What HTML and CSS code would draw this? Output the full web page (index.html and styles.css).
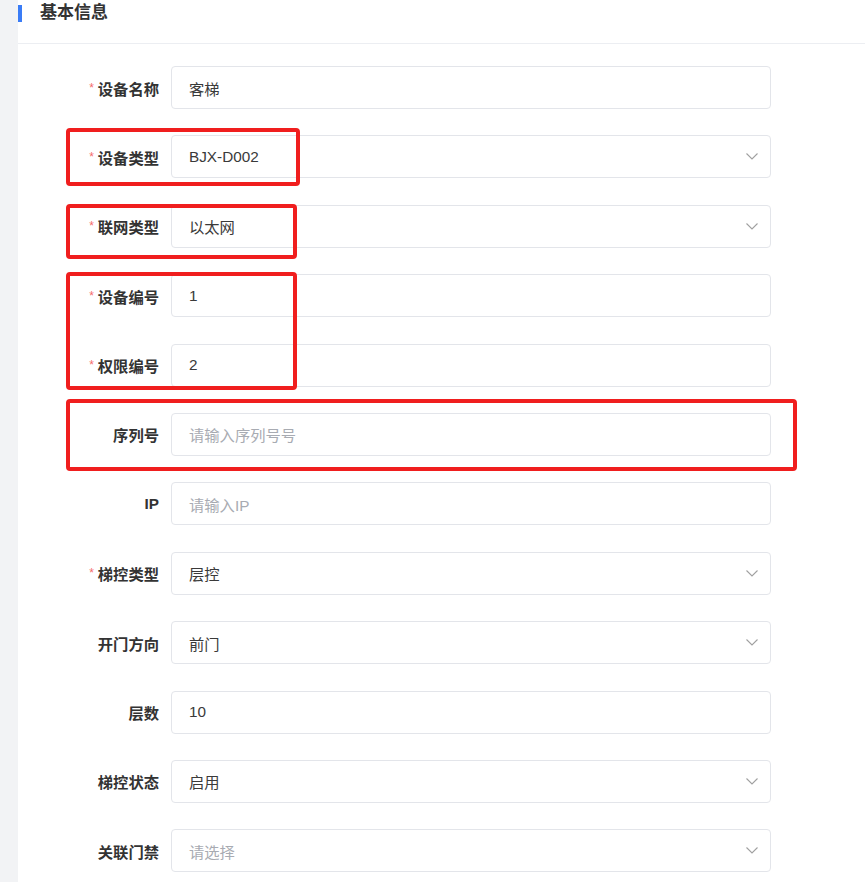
FILE: index.html
```html
<!DOCTYPE html>
<html lang="zh-CN">
<head>
  <meta charset="UTF-8" />
  <meta name="viewport" content="width=device-width, initial-scale=1.0" />
  <title>基本信息</title>
  <link rel="stylesheet" href="styles.css">
</head>
<body>
  <div class="card">
    <div class="card-header">
      <span class="bar"></span>
      <h2>基本信息</h2>
    </div>

    <form class="form">
      <div class="row">
        <label class="label required">设备名称</label>
        <div class="field"><span class="value">客梯</span></div>
      </div>
      <div class="row">
        <label class="label required">设备类型</label>
        <div class="field select"><span class="value">BJX-D002</span><svg class="arrow" viewBox="0 0 12 7"><polyline points="0.5,0.5 6,6 11.5,0.5"/></svg></div>
      </div>
      <div class="row">
        <label class="label required">联网类型</label>
        <div class="field select"><span class="value">以太网</span><svg class="arrow" viewBox="0 0 12 7"><polyline points="0.5,0.5 6,6 11.5,0.5"/></svg></div>
      </div>
      <div class="row">
        <label class="label required">设备编号</label>
        <div class="field"><span class="value">1</span></div>
      </div>
      <div class="row">
        <label class="label required">权限编号</label>
        <div class="field"><span class="value">2</span></div>
      </div>
      <div class="row">
        <label class="label">序列号</label>
        <div class="field"><span class="placeholder">请输入序列号号</span></div>
      </div>
      <div class="row">
        <label class="label">IP</label>
        <div class="field"><span class="placeholder">请输入IP</span></div>
      </div>
      <div class="row">
        <label class="label required">梯控类型</label>
        <div class="field select"><span class="value">层控</span><svg class="arrow" viewBox="0 0 12 7"><polyline points="0.5,0.5 6,6 11.5,0.5"/></svg></div>
      </div>
      <div class="row">
        <label class="label">开门方向</label>
        <div class="field select"><span class="value">前门</span><svg class="arrow" viewBox="0 0 12 7"><polyline points="0.5,0.5 6,6 11.5,0.5"/></svg></div>
      </div>
      <div class="row">
        <label class="label">层数</label>
        <div class="field"><span class="value">10</span></div>
      </div>
      <div class="row">
        <label class="label">梯控状态</label>
        <div class="field select"><span class="value">启用</span><svg class="arrow" viewBox="0 0 12 7"><polyline points="0.5,0.5 6,6 11.5,0.5"/></svg></div>
      </div>
      <div class="row">
        <label class="label">关联门禁</label>
        <div class="field select"><span class="placeholder">请选择</span><svg class="arrow" viewBox="0 0 12 7"><polyline points="0.5,0.5 6,6 11.5,0.5"/></svg></div>
      </div>

      <!-- review marks drawn over the form -->
      <div class="mark mark-type"></div>
      <div class="mark mark-net"></div>
      <div class="mark mark-no"></div>
      <div class="mark mark-sn"></div>
    </form>
  </div>
</body>
</html>
```

FILE: styles.css
```css
html, body {
  margin: 0;
  height: 100%;
}
body {
  background: #f2f3f5;
  font-family: "Liberation Sans", "Noto Sans CJK SC", sans-serif;
  color: #333;
  padding-left: 18px;
  overflow: hidden;
}
.card {
  background: #fff;
  min-height: 100%;
}
.card-header {
  height: 44px;
  border-bottom: 1px solid #eceef2;
  display: flex;
  align-items: flex-start;
  box-sizing: border-box;
}
.bar {
  width: 4px;
  height: 17px;
  margin-top: 5px;
  background: #3a7cf6;
}
.card-header h2 {
  margin: 2px 0 0 18px;
  font-size: 17px;
  line-height: 21px;
  font-weight: bold;
  color: #333;
}
.form {
  position: relative;
  padding-top: 22px;
  display: flex;
  flex-direction: column;
  gap: 26.4px;
}
.row {
  display: flex;
  align-items: center;
}
.label {
  width: 141px;
  padding-right: 12px;
  text-align: right;
  font-size: 15.3px;
  font-weight: bold;
  color: #333;
  box-sizing: content-box;
}
.label.required::before {
  content: "*";
  color: #f56c6c;
  font-weight: normal;
  font-size: 12px;
  margin-right: 4px;
  position: relative;
  top: -3px;
}
.field {
  width: 600px;
  height: 43px;
  box-sizing: border-box;
  border: 1px solid #e3e5ea;
  border-radius: 4px;
  display: flex;
  align-items: center;
  padding: 0 12px 0 17px;
  font-size: 15.3px;
}
.value {
  color: #3a3a3a;
  flex: 1;
}
.placeholder {
  color: #a8abb2;
  flex: 1;
}
.arrow {
  width: 12px;
  height: 7px;
  fill: none;
  stroke: #a0a0a0;
  stroke-width: 1.1;
}
.mark {
  position: absolute;
  border: 4px solid #f01e1e;
  border-radius: 4px;
  box-sizing: border-box;
}
.mark-type {
  left: 48px;
  top: 84px;
  width: 234px;
  height: 58px;
}
.mark-net {
  left: 48px;
  top: 160px;
  width: 231px;
  height: 55px;
}
.mark-no {
  left: 48px;
  top: 228px;
  width: 231px;
  height: 118px;
}
.mark-sn {
  left: 48px;
  top: 355px;
  width: 731px;
  height: 72px;
}
```
